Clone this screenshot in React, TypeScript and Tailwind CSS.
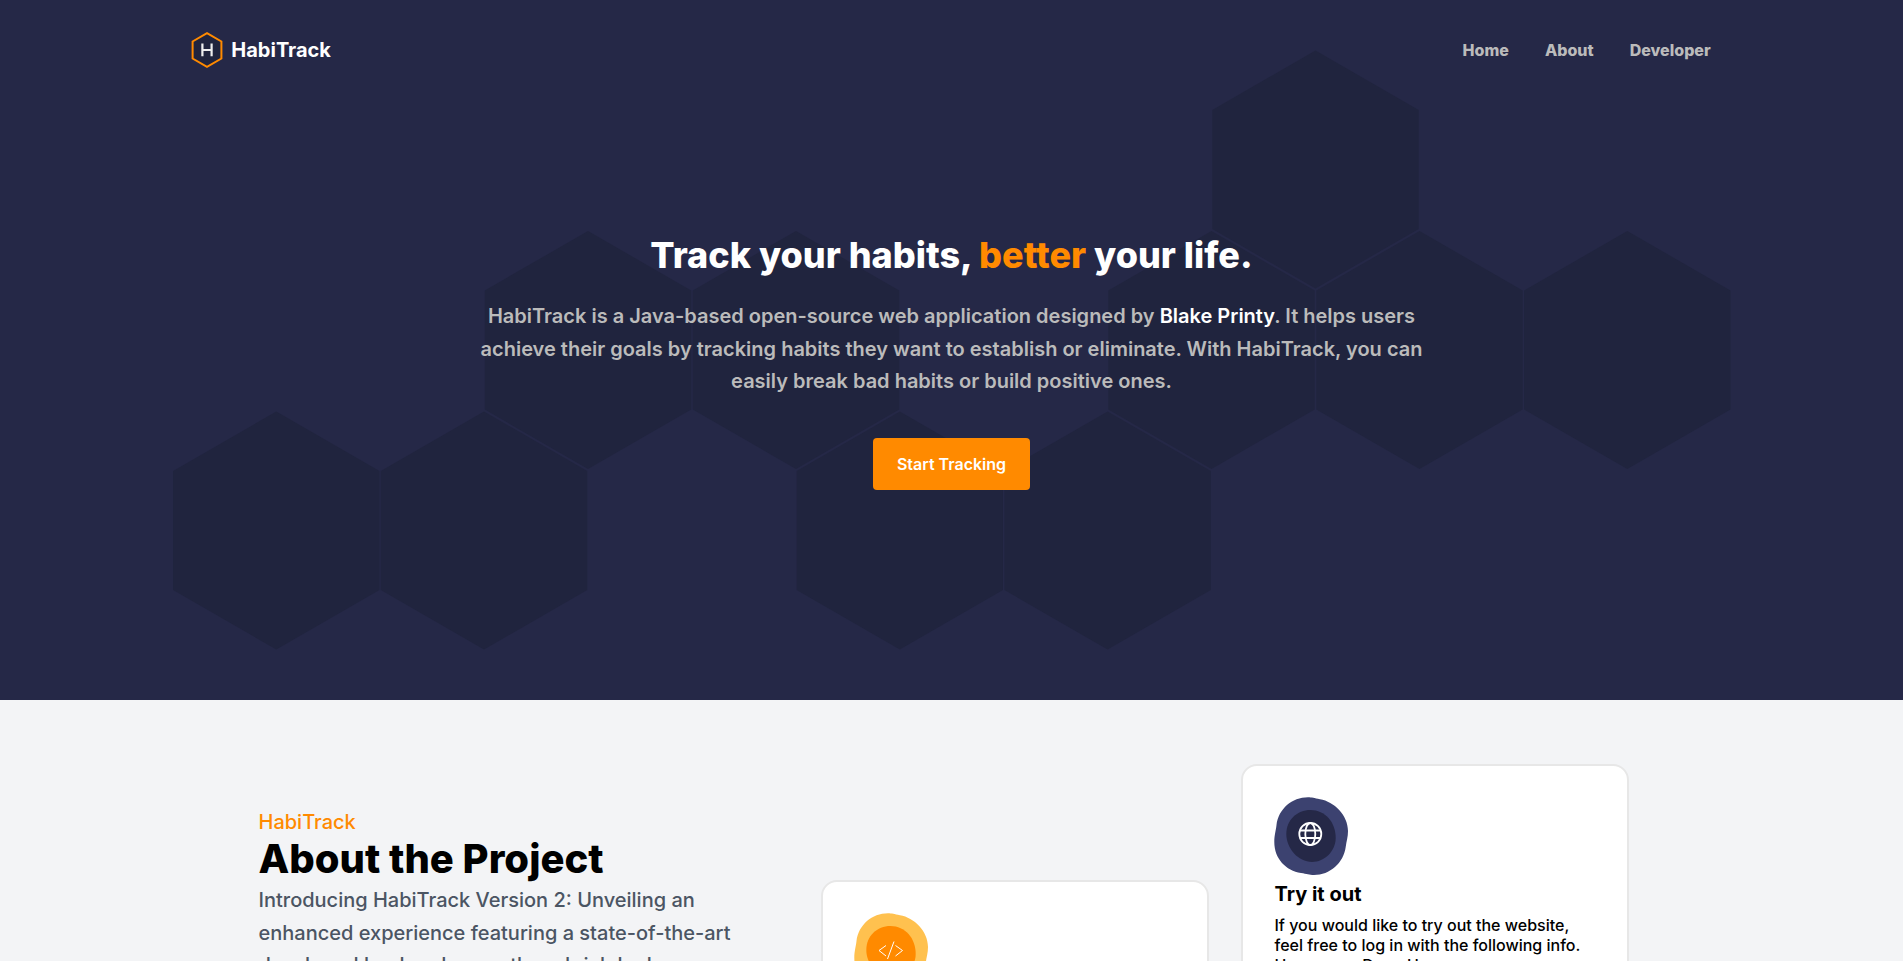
import type { ReactNode } from "react";

const HEX_CENTERS: [number, number][] = [
  [1142.5, 119.5],
  [415, 300],
  [623, 300],
  [1038.5, 300],
  [1246.5, 300],
  [1454.3, 300],
  [103.3, 480.5],
  [311, 480.5],
  [726.8, 480.5],
  [934.6, 480.5],
];

function HexBackdrop() {
  return (
    <svg viewBox="0 0 1558 600" className="absolute inset-x-0 top-[50px] mx-auto w-[1558px]" aria-hidden="true">
      {HEX_CENTERS.map(([x, y]) => (
        <path
          key={`${x}-${y}`}
          transform={`translate(${x} ${y})`}
          d="M0-119 103.2-59.500V59.500L0 119-103.2 59.500V-59.500Z"
          fill="#20243e"
        />
      ))}
    </svg>
  );
}

function Logo() {
  return (
    <svg viewBox="0 0 32 36" className="h-9 w-8" aria-hidden="true">
      <path d="M16 1.2 30.4 9.5v17L16 34.8 1.6 26.500V9.5Z" fill="#20243e" stroke="#ff8a00" strokeWidth="2" />
      <path d="M11.400 11.500v12.800M20.600 11.500v12.800M11.400 18h9.200" fill="none" stroke="#eee" strokeWidth="2.200" />
    </svg>
  );
}

function Blob({ outer, inner, children }: { outer: string; inner: string; children: ReactNode }) {
  return (
    <svg viewBox="0 0 74 78" className="-mt-px -ml-px h-[78px] w-[74px]" aria-hidden="true">
      <path
        d="M34 .3C38 .3 40 1.200 46 2.200C60 4.500 74 18 74 34C74 40 72.500 44 71.700 50C69.500 66 56 78 40 78C35 78 33 76.800 27 76C12 73.500 .3 62 .3 45C.3 38 1.800 34 2.500 28C4.500 12 18 .3 34 .3Z"
        fill={outer}
      />
      <path
        d="M36.500 13C51 13 61.700 25 61.700 41C61.700 54 50.500 65 38 65C24 65 12.300 51 12.300 37C12.300 23 23 13 36.500 13Z"
        fill={inner}
      />
      {children}
    </svg>
  );
}

function Card({ icon, title, children }: { icon: ReactNode; title: string; children: ReactNode }) {
  return (
    <article className="w-[388px] rounded-2xl border-2 border-[#e7e7e7] bg-white p-8">
      {icon}
      <h3 className="mt-1 text-xl leading-[30px] font-bold">{title}</h3>
      <p className="mt-1.5 leading-5 font-medium">{children}</p>
    </article>
  );
}

export default function App() {
  return (
    <div className="min-h-screen bg-gray-100 font-['Inter',sans-serif] text-black">
      <section className="relative h-[700px] bg-[#252847]">
        <HexBackdrop />
        <header className="relative mx-auto flex h-[100px] w-4/5 items-center justify-between px-px">
          <a href="#home" className="flex items-center gap-2 text-xl font-bold text-white">
            <Logo />
            HabiTrack
          </a>
          <nav className="flex gap-9 pr-px font-extrabold text-[#bbb]">
            <a href="#home">Home</a>
            <a href="#about">About</a>
            <a href="#developer">Developer</a>
          </nav>
        </header>
        <div className="relative mx-auto flex max-w-[960px] flex-col items-center pt-[133px] text-center">
          <h1 className="text-4xl leading-[44px] font-extrabold text-white">
            Track your habits, <span className="text-[#ff8a00]">better</span> your life.
          </h1>
          <p className="mt-[23px] text-xl leading-relaxed font-semibold text-[#bbb]">
            HabiTrack is a Java-based open-source web application designed by{" "}
            <a href="#developer" className="text-white">Blake Printy</a>. It helps users achieve their goals by
            tracking habits they want to establish or eliminate. With HabiTrack, you can easily break bad habits or
            build positive ones.
          </p>
          <button type="button" className="mt-10 h-[52px] rounded bg-[#ff8a00] px-6 font-semibold text-white">
            Start Tracking
          </button>
        </div>
      </section>

      <section id="about" className="mx-auto flex w-[1386px] max-w-full justify-between pt-16 pr-4">
        <div className="w-[500px] pt-11">
          <p className="text-xl leading-7 font-medium text-[#ff8a00]">HabiTrack</p>
          <h2 className="mb-0.5 text-[40px] leading-[46px] font-extrabold">About the Project</h2>
          <p className="text-xl leading-relaxed font-medium text-[#4b5563]">
            Introducing HabiTrack Version 2: Unveiling an enhanced experience featuring a state-of-the-art
            developed backend, smooth and rich look
          </p>
        </div>
        <div className="flex items-start gap-8">
          <div className="pt-[116px]">
            <Card
              title="The code"
              icon={
                <Blob outer="#ffc14f" inner="#ff8a00">
                  <path
                    d="m32 32.500-7 5 7 5.500M41.500 32.500l7 5-7 5.500M40 28.500 33.500 46"
                    fill="none"
                    stroke="#fff"
                    strokeWidth="1"
                  />
                </Blob>
              }
            >
              HabiTrack is open source.
            </Card>
          </div>
          <Card
            title="Try it out"
            icon={
              <Blob outer="#3c4270" inner="#252847">
                <g fill="none" stroke="#fff" strokeWidth="1.800">
                  <circle cx="36.300" cy="37" r="11" />
                  <ellipse cx="36.300" cy="37" rx="5" ry="11" />
                  <path d="M26 33.500h21M26 41h21" />
                </g>
              </Blob>
            }
          >
            If you would like to try out the website, feel free to log in with the following info.
            <br />
            Username: DemoUser
          </Card>
        </div>
      </section>
    </div>
  );
}
